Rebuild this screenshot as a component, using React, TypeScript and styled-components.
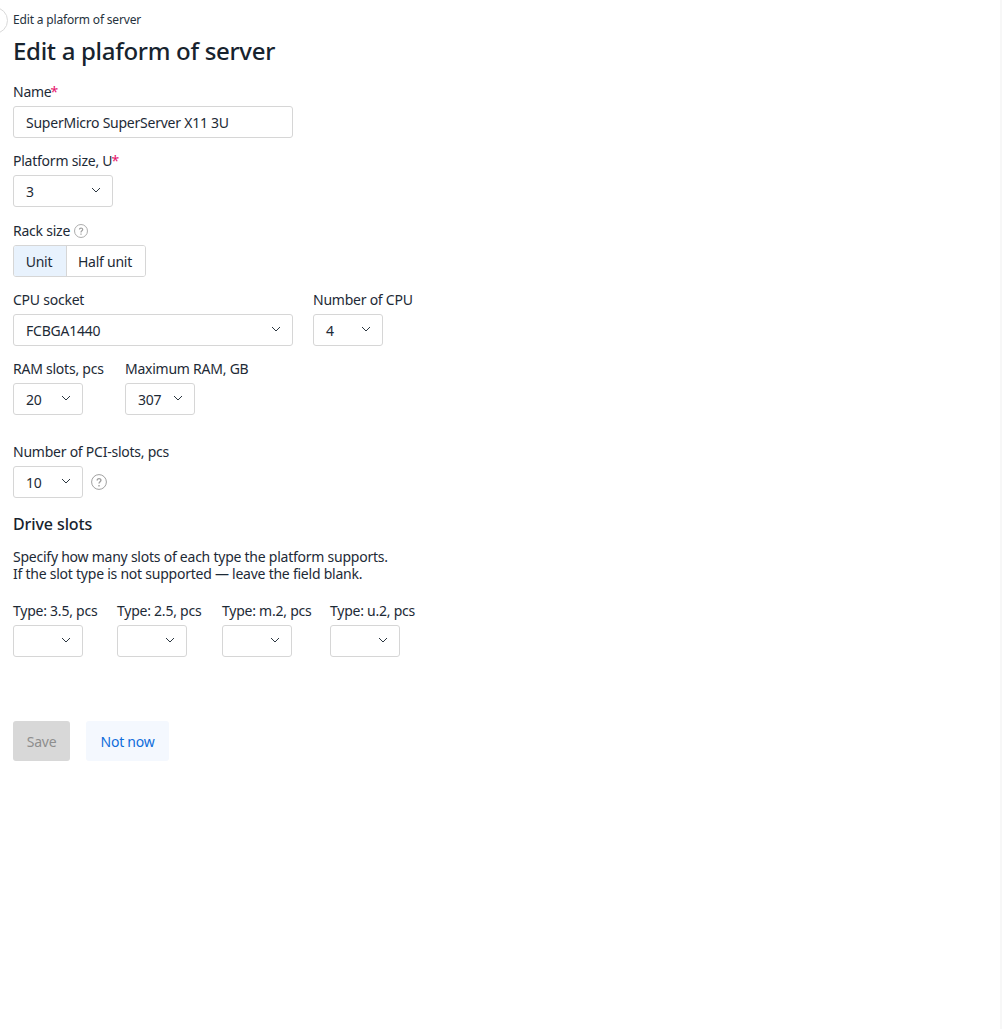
import React from "react";
import styled, { createGlobalStyle } from "styled-components";

const GlobalStyle = createGlobalStyle`
  html, body {
    margin: 0;
    padding: 0;
    background: #fff;
  }
  body {
    font-family: "Noto Sans", "Open Sans", sans-serif;
    font-size: 14px;
    line-height: 20px;
    letter-spacing: -0.24px;
    color: #1d2a36;
  }
`;

const Page = styled.div`
  position: relative;
  min-height: 1029px;
  padding: 10px 0 0 13px;
  box-sizing: border-box;
  overflow: hidden;
  border-right: 2px solid #f7f7f7;
`;

const BackCircle = styled.div`
  position: absolute;
  left: -19px;
  top: 7px;
  width: 25px;
  height: 25px;
  border: 1px solid #d9d9d9;
  border-radius: 50%;
`;

const Crumb = styled.div`
  font-size: 12px;
  line-height: 20px;
  letter-spacing: -0.17px;
  color: #26323d;
`;

const Title = styled.h1`
  margin: 5px 0 14px;
  font-size: 24px;
  line-height: 32px;
  font-weight: 500;
  letter-spacing: -0.3px;
  color: #17232e;
`;

const Row = styled.div<{ $mb?: number }>`
  display: flex;
  gap: 20px;
  margin-bottom: ${(p) => p.$mb ?? 12}px;
`;

const Field = styled.div<{ $width?: number }>`
  display: flex;
  flex-direction: column;
  width: ${(p) => (p.$width ? `${p.$width}px` : "auto")};
`;

const Label = styled.label`
  display: flex;
  align-items: center;
  gap: 4px;
  box-sizing: border-box;
  height: 20px;
  padding-top: 2px;
  margin-bottom: 5px;
  white-space: nowrap;
`;

const Required = styled.span`
  color: #e5146c;
  margin-left: -5px;
`;

const Control = styled.div<{ $width: number }>`
  display: flex;
  align-items: center;
  justify-content: space-between;
  box-sizing: border-box;
  width: ${(p) => p.$width}px;
  height: 32px;
  padding: 2px 12px 0;
  background: #fff;
  border: 1px solid #d6d6d6;
  border-radius: 3px;
`;

const Chevron = styled.svg`
  flex: none;
  width: 12px;
  height: 12px;
  margin-top: -4px;
  fill: none;
  stroke: #2b3640;
  stroke-width: 1;
`;

const HelpIcon = styled.svg<{ $size: number }>`
  flex: none;
  width: ${(p) => p.$size}px;
  height: ${(p) => p.$size}px;
  fill: none;
  stroke: #a0a0a0;
`;

const WithHelp = styled.div`
  display: flex;
  align-items: center;
  gap: 8px;
`;

const Segmented = styled.div`
  display: inline-flex;
  height: 32px;
  box-sizing: border-box;
  border: 1px solid #d6d6d6;
  border-radius: 3px;
  overflow: hidden;
`;

const Segment = styled.div<{ $active?: boolean; $width: number }>`
  display: flex;
  align-items: center;
  justify-content: center;
  padding: 2px 2px 0 0;
  box-sizing: border-box;
  width: ${(p) => p.$width}px;
  background: ${(p) => (p.$active ? "#e8f2fd" : "#fff")};
  & + & {
    border-left: 1px solid #d6d6d6;
  }
`;

const Subtitle = styled.h2`
  margin: 0 0 12px;
  font-size: 16px;
  line-height: 24px;
  font-weight: 500;
  letter-spacing: -0.1px;
  color: #17232e;
`;

const Hint = styled.p`
  margin: 0 0 18px;
  line-height: 17px;
`;

const Actions = styled.div`
  display: flex;
  gap: 16px;
  margin-top: 64px;
`;

const Button = styled.button<{ $variant: "disabled" | "ghost"; $width: number }>`
  width: ${(p) => p.$width}px;
  height: 40px;
  padding: 2px 0 0;
  border: 0;
  border-radius: 3px;
  font: inherit;
  letter-spacing: inherit;
  background: ${(p) => (p.$variant === "disabled" ? "#d8d8d8" : "#f4f8fe")};
  color: ${(p) => (p.$variant === "disabled" ? "#8e8e8e" : "#0f6ddb")};
`;

const Select = ({ value, width }: { value?: string; width: number }) => (
  <Control $width={width}>
    <span>{value}</span>
    <Chevron viewBox="0 0 12 12">
      <path d="M4 4 L8 8 L12 4" />
    </Chevron>
  </Control>
);

const Help = ({ size }: { size: number }) => (
  <HelpIcon $size={size} viewBox="0 0 16 16">
    <circle cx="8" cy="8" r="7.4" />
    <path d="M6.2 6.4 C6.2 4 9.9 4 9.9 6.3 C9.9 7.8 8 7.8 8 9.6" strokeWidth="1.4" />
    <path d="M8 10.9 V12.4" strokeWidth="1.4" />
  </HelpIcon>
);

const driveSlots = [
  { label: "Type: 3.5, pcs", width: 84 },
  { label: "Type: 2.5, pcs", width: 85 },
  { label: "Type: m.2, pcs", width: 88 },
  { label: "Type: u.2, pcs", width: 84 },
];

export default function App() {
  return (
    <>
      <GlobalStyle />
      <Page>
        <BackCircle />
        <Crumb>Edit a plaform of server</Crumb>
        <Title>Edit a plaform of server</Title>

        <Row>
          <Field>
            <Label>
              Name<Required>*</Required>
            </Label>
            <Control $width={280}>SuperMicro SuperServer X11 3U</Control>
          </Field>
        </Row>

        <Row $mb={13}>
          <Field>
            <Label>
              Platform size, U<Required>*</Required>
            </Label>
            <Select value="3" width={100} />
          </Field>
        </Row>

        <Row>
          <Field>
            <Label>
              Rack size <Help size={14} />
            </Label>
            <Segmented>
              <Segment $active $width={52}>Unit</Segment>
              <Segment $width={79}>Half unit</Segment>
            </Segmented>
          </Field>
        </Row>

        <Row>
          <Field>
            <Label>CPU socket</Label>
            <Select value="FCBGA1440" width={280} />
          </Field>
          <Field>
            <Label>Number of CPU</Label>
            <Select value="4" width={70} />
          </Field>
        </Row>

        <Row $mb={26}>
          <Field $width={92}>
            <Label>RAM slots, pcs</Label>
            <Select value="20" width={70} />
          </Field>
          <Field>
            <Label>Maximum RAM, GB</Label>
            <Select value="307" width={70} />
          </Field>
        </Row>

        <Row $mb={14}>
          <Field>
            <Label>Number of PCI-slots, pcs</Label>
            <WithHelp>
              <Select value="10" width={70} />
              <Help size={16} />
            </WithHelp>
          </Field>
        </Row>

        <Subtitle>Drive slots</Subtitle>
        <Hint>
          Specify how many slots of each type the platform supports.
          <br />
          If the slot type is not supported — leave the field blank.
        </Hint>

        <Row>
          {driveSlots.map((slot) => (
            <Field key={slot.label} $width={slot.width}>
              <Label>{slot.label}</Label>
              <Select width={70} />
            </Field>
          ))}
        </Row>

        <Actions>
          <Button $variant="disabled" $width={57}>Save</Button>
          <Button $variant="ghost" $width={83}>Not now</Button>
        </Actions>
      </Page>
    </>
  );
}
